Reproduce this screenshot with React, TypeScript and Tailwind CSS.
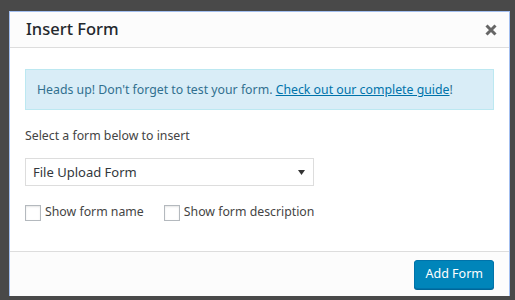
import React, { useState } from 'react';

const font = { fontFamily: '"Noto Sans", "Open Sans", Arial, sans-serif' };

const Checkbox: React.FC<{ label: string }> = ({ label }) => {
    const [checked, setChecked] = useState(false);
    return (
        <label className="flex items-center gap-[4px] cursor-pointer text-[12.3px] text-[#444]">
            <span
                onClick={() => setChecked(!checked)}
                className="w-[16px] h-[16px] border border-[#b4b9be] bg-white shadow-[inset_0_1px_2px_rgba(0,0,0,0.1)] flex items-center justify-center"
            >
                {checked && <span className="text-[#1e8cbe] text-[12px] leading-none">✓</span>}
            </span>
            <span>{label}</span>
        </label>
    );
};

const App: React.FC = () => {
    return (
        <div className="w-[515px] h-[300px] bg-[#494949] pt-[11px] pl-[9px]" style={font}>
            <div className="w-[501px] h-[285px] flex flex-col border border-b-0 border-[#a3bff0] bg-white">
                {/* header */}
                <div className="h-[36px] flex items-center justify-between pl-[16px] pr-[12px] bg-[#fcfcfc] border-b border-[#dddddd]">
                    <h1 className="text-[16.5px] font-medium text-[#23282d] leading-none">Insert Form</h1>
                    <button className="w-[12px] h-[12px] flex items-center justify-center">
                        <svg width="12" height="12" viewBox="0 0 12 12">
                            <path d="M1.5 1.5 L10.5 10.5 M10.5 1.5 L1.5 10.5" stroke="#666" strokeWidth="3" />
                        </svg>
                    </button>
                </div>

                {/* body */}
                <div className="flex-1 px-[15px] pt-[21px]">
                    <div className="h-[41px] flex items-center px-[11px] pt-[2px] bg-[#d9edf7] border border-[#bce8f1] text-[12.3px] text-[#31708f]">
                        <p>
                            Heads up! Don't forget to test your form.{' '}
                            <a href="#" className="text-[#0073aa] underline">Check out our complete guide</a>!
                        </p>
                    </div>

                    <p className="mt-[17px] text-[12.3px] text-[#444]">Select a form below to insert</p>

                    <div className="mt-[13px] w-[289px] h-[28px] flex items-center justify-between pl-[7px] pr-[8px] border border-[#dddddd] bg-white text-[13px] text-[#32373c]">
                        <span>File Upload Form</span>
                        <svg width="7" height="5" viewBox="0 0 7 5">
                            <path d="M0 0 L7 0 L3.5 5 Z" fill="#333" />
                        </svg>
                    </div>

                    <div className="mt-[17px] flex items-center gap-[20px]">
                        <Checkbox label="Show form name" />
                        <Checkbox label="Show form description" />
                    </div>
                </div>

                {/* footer */}
                <div className="h-[45px] flex justify-end items-start pt-[8px] pr-[15px] bg-[#fcfcfc] border-t border-[#dddddd]">
                    <button className="h-[29px] px-[10px] rounded-[3px] bg-[#0085ba] border border-[#0073aa] shadow-[0_1px_0_#006799] text-white text-[12.5px]">
                        Add Form
                    </button>
                </div>
            </div>
        </div>
    );
};

export default App;
